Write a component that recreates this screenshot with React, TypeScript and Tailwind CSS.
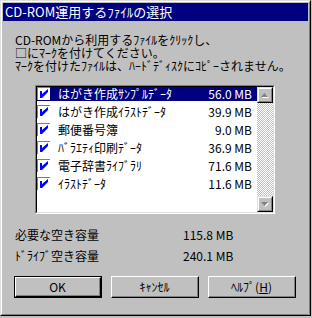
const files = [
  { name: 'はがき作成ｻﾝﾌﾟﾙﾃﾞｰﾀ', size: '56.0 MB' },
  { name: 'はがき作成ｲﾗｽﾄﾃﾞｰﾀ', size: '39.9 MB' },
  { name: '郵便番号簿', size: '9.0 MB' },
  { name: 'ﾊﾞﾗｴﾃｨ印刷ﾃﾞｰﾀ', size: '36.9 MB' },
  { name: '電子辞書ﾗｲﾌﾞﾗﾘ', size: '71.6 MB' },
  { name: 'ｲﾗｽﾄﾃﾞｰﾀ', size: '11.6 MB' },
]

function CheckMark() {
  return (
    <div className="w-[13px] h-[13px] bg-white border-t border-l border-t-[#808080] border-l-[#808080] shrink-0">
      <svg width="12" height="12" viewBox="0 0 12 12">
        <polygon points="2,3 4,3 4,6 10,1 10,4 4,10 2,10" fill="#0000ff" />
      </svg>
    </div>
  )
}

function ArrowButton({ down }: { down?: boolean }) {
  return (
    <div className="w-[16px] h-[16px] bg-[#c0c0c0] border border-t-[#dfdfdf] border-l-[#dfdfdf] border-r-black border-b-black">
      <div className="w-full h-full border border-t-white border-l-white border-r-[#808080] border-b-[#808080] flex items-center justify-center">
        <svg width="8" height="5" viewBox="0 0 8 5">
          {down ? (
            <>
              <polygon points="1,1 8,1 4.5,5" fill="#ffffff" />
              <polygon points="0,0 7,0 3.5,4" fill="#808080" />
            </>
          ) : (
            <>
              <polygon points="4.5,1 8,5 1,5" fill="#ffffff" />
              <polygon points="3.5,0 7,4 0,4" fill="#808080" />
            </>
          )}
        </svg>
      </div>
    </div>
  )
}

function Button({ children, primary }: { children: React.ReactNode; primary?: boolean }) {
  return (
    <div className={primary ? 'w-[88px] h-[22px] border border-black' : 'w-[88px] h-[22px]'}>
      <div className="w-full h-full border border-t-white border-l-white border-r-black border-b-black">
        <div className="w-full h-full border-r border-b border-r-[#808080] border-b-[#808080] flex items-center justify-center text-[12px] text-black">
          {children}
        </div>
      </div>
    </div>
  )
}

export default function App() {
  return (
    <div className="w-[312px] h-[318px] bg-[#c0c0c0] font-['Noto_Sans_CJK_JP',sans-serif] text-black">
      <div className="w-[311px] h-[316px] border border-t-[#dfdfdf] border-l-[#dfdfdf] border-r-black border-b-black">
        <div className="h-full border border-t-white border-l-white border-r-[#808080] border-b-[#808080] p-px flex flex-col">
          <div className="h-[18px] bg-[#000080] text-white text-[13px] leading-[18px] pl-[2px]">
            CD-ROM運用するﾌｧｲﾙの選択
          </div>

          <div className="mt-[12px] pl-[12px] text-[12px] leading-[13px]">
            <p>CD-ROMから利用するﾌｧｲﾙをｸﾘｯｸし、</p>
            <p>□にﾏｰｸを付けてください。</p>
            <p>ﾏｰｸを付けたﾌｧｲﾙは、ﾊｰﾄﾞﾃﾞｨｽｸにｺﾋﾟｰされません。</p>
          </div>

          <div className="mt-[13px] ml-[32px] w-[240px] h-[129px] border border-t-[#808080] border-l-[#808080] border-r-white border-b-white">
            <div className="w-full h-full border border-t-black border-l-black border-r-[#dfdfdf] border-b-[#dfdfdf] bg-white flex">
              <div className="flex-1 flex flex-col">
                {files.map((f, i) => (
                  <div key={f.name} className="h-[18px] shrink-0">
                    <div
                      className={
                        i === 0
                          ? 'h-[14px] flex items-start bg-[#000080] text-white'
                          : 'h-[14px] flex items-start text-black'
                      }
                    >
                      <CheckMark />
                      <span className="ml-[8px] text-[12px] leading-[14px] flex-1">{f.name}</span>
                      <span className="pr-[5px] text-[12px] leading-[14px]">{f.size}</span>
                    </div>
                  </div>
                ))}
              </div>
              <div className="w-[16px] flex flex-col">
                <ArrowButton />
                <div className="flex-1 bg-[repeating-conic-gradient(#c0c0c0_0%_25%,#ffffff_0%_50%)] bg-[length:2px_2px]" />
                <ArrowButton down />
              </div>
            </div>
          </div>

          <div className="mt-[14px] pl-[12px] text-[12px] leading-[14px] flex flex-col gap-[7px]">
            <div className="flex">
              <span className="w-[168px]">必要な空き容量</span>
              <span>115.8 MB</span>
            </div>
            <div className="flex">
              <span className="w-[168px]">ﾄﾞﾗｲﾌﾞ空き容量</span>
              <span>240.1 MB</span>
            </div>
          </div>

          <div className="mt-[13px] pl-[11px] flex gap-[9px]">
            <Button primary>OK</Button>
            <Button>ｷｬﾝｾﾙ</Button>
            <Button>
              ﾍﾙﾌﾟ(<span className="underline">H</span>)
            </Button>
          </div>
        </div>
      </div>
    </div>
  )
}
